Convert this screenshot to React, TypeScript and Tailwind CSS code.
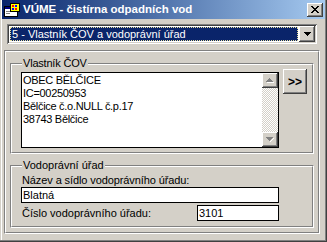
import React from "react";

const raised =
  "shadow-[inset_-1px_-1px_0_#404040,inset_1px_1px_0_#ffffff,inset_-2px_-2px_0_#808080]";
const sunken =
  "shadow-[inset_1px_1px_0_#808080,inset_-1px_-1px_0_#ffffff,inset_2px_2px_0_#404040,inset_-2px_-2px_0_#d4d0c8]";

function Etched({ className, children }: { className: string; children?: React.ReactNode }) {
  return (
    <div className={`border border-t-[#808080] border-l-[#808080] border-r-white border-b-white ${className}`}>
      <div className="w-full h-full border border-t-white border-l-white border-r-[#808080] border-b-[#808080] relative">
        {children}
      </div>
    </div>
  );
}

function AppIcon() {
  return (
    <svg width="16" height="16" viewBox="0 0 16 16" shapeRendering="crispEdges">
      <rect x="0.5" y="4.5" width="13" height="10" fill="#ffffff" stroke="#000000" />
      <rect x="1" y="5" width="12" height="2" fill="#000080" />
      <rect x="2" y="9" width="4" height="1" fill="#808080" />
      <rect x="2" y="11" width="4" height="1" fill="#808080" />
      <rect x="6.5" y="1.5" width="9" height="8" fill="#ffff00" stroke="#000000" />
      <rect x="8" y="3" width="2" height="2" fill="#ff0000" />
      <rect x="11" y="3" width="2" height="2" fill="#0000ff" />
      <rect x="8" y="6" width="2" height="2" fill="#0000ff" />
      <rect x="11" y="6" width="2" height="2" fill="#ff0000" />
    </svg>
  );
}

export default function App() {
  return (
    <div className="w-[327px] h-[242px] bg-[#404040] pr-px pb-px overflow-hidden font-['Liberation_Sans',Arial,sans-serif] text-[11px] text-black">
      <div className="h-full bg-[#808080] pr-px pb-px">
        <div className="h-full bg-[#d4d0c8] pl-px">
          <div className="h-full border-l border-white flex flex-col">
            {/* Title bar */}
            <div className="h-[19px] bg-linear-to-r from-[#0a246a] to-[#a6caf0] flex items-center pl-[2px] pr-[2px]">
              <AppIcon />
              <span className="ml-[3px] text-white font-bold text-[11.5px] leading-none">
                VÚME - čistírna odpadních vod
              </span>
              <div className={`ml-auto w-[16px] h-[14px] bg-[#d4d0c8] ${raised} flex items-center justify-center`}>
                <svg width="8" height="7" viewBox="0 0 8 7" shapeRendering="crispEdges">
                  <path d="M0 0h2v1h-2zM6 0h2v1h-2zM1 1h2v1h-2zM5 1h2v1h-2zM2 2h4v1h-4zM3 3h2v1h-2zM2 4h4v1h-4zM1 5h2v1h-2zM5 5h2v1h-2zM0 6h2v1h-2zM6 6h2v1h-2z" fill="#000" />
                </svg>
              </div>
            </div>

            {/* Combobox */}
            <div className={`ml-[5px] mt-[5px] w-[310px] h-[20px] bg-white ${sunken} p-[2px] flex`}>
              <div className="flex-1 p-[1px]">
                <div className="h-full bg-[#0a246a] outline-1 outline-dotted outline-[#e8e0a0] -outline-offset-1 text-white flex items-center pl-[2px] text-[11px] leading-none">
                  5 - Vlastník ČOV a vodoprávní úřad
                </div>
              </div>
              <div className={`w-[16px] h-full bg-[#d4d0c8] ${raised} flex items-center justify-center`}>
                <svg width="7" height="4" viewBox="0 0 7 4" shapeRendering="crispEdges">
                  <path d="M0 0h7v1h-7zM1 1h5v1h-5zM2 2h3v1h-3zM3 3h1v1h-1z" fill="#000" />
                </svg>
              </div>
            </div>

            {/* Outer frame */}
            <Etched className="ml-[2px] mt-[6px] w-[316px] h-[184px]">
              {/* Groupbox 1 */}
              <Etched className="ml-[4px] mt-[11px] w-[304px] h-[91px]">
                <span className="absolute left-[10px] -top-[8px] px-[1px] bg-[#d4d0c8] leading-[13px] tracking-[-0.2px]">
                  Vlastník ČOV
                </span>
                <div className="flex items-start pl-[9px] pt-[4px]">
                  <div className="mt-[3px] w-[258px] h-[76px] border border-black bg-white flex">
                    <div className="flex-1 pl-[1px] pt-[1px] leading-[13px] tracking-[-0.3px]">
                      <div>OBEC BĚLČICE</div>
                      <div>IC=00250953</div>
                      <div>Bělčice č.o.NULL č.p.17</div>
                      <div>38743 Bělčice</div>
                    </div>
                    <div className="w-[16px] h-full flex flex-col bg-[repeating-conic-gradient(#ffffff_0_25%,#d4d0c8_0_50%)] bg-[length:2px_2px]">
                      <div className={`h-[15px] bg-[#d4d0c8] ${raised} flex items-center justify-center`}>
                        <svg width="8" height="5" viewBox="0 0 8 5" shapeRendering="crispEdges">
                          <path d="M3 0h1v1h-1zM2 1h3v1h-3zM1 2h5v1h-5zM0 3h7v1h-7z" fill="#808080" />
                          <path d="M1 4h7v1h-7z" fill="#ffffff" />
                        </svg>
                      </div>
                      <div className="flex-1" />
                      <div className={`h-[15px] bg-[#d4d0c8] ${raised} flex items-center justify-center`}>
                        <svg width="8" height="5" viewBox="0 0 8 5" shapeRendering="crispEdges">
                          <path d="M0 0h7v1h-7zM1 1h5v1h-5zM2 2h3v1h-3zM3 3h1v1h-1z" fill="#808080" />
                          <path d="M7 1h1v1h-1zM6 2h1v1h-1zM5 3h1v1h-1zM4 4h1v1h-1z" fill="#ffffff" />
                        </svg>
                      </div>
                    </div>
                  </div>
                  <div className={`ml-[4px] w-[24px] h-[25px] bg-[#d4d0c8] ${raised} flex items-center justify-center font-bold text-[12px] leading-none`}>
                    &gt;&gt;
                  </div>
                </div>
              </Etched>

              {/* Groupbox 2 */}
              <Etched className="ml-[4px] mt-[11px] w-[304px] h-[63px]">
                <span className="absolute left-[10px] -top-[8px] px-[1px] bg-[#d4d0c8] leading-[13px]">
                  Vodoprávní úřad
                </span>
                <div className="pl-[9px] pt-[7px]">
                  <div className="pl-[1px] leading-[13px] tracking-[-0.1px]">Název a sídlo vodoprávního úřadu:</div>
                  <div className="w-[258px] h-[16px] border border-black bg-white pl-[1px] leading-[14px]">
                    Blatná
                  </div>
                  <div className="mt-[2px] w-[258px] h-[16px] flex items-center">
                    <span className="pl-[1px] leading-[13px]">Číslo vodoprávního úřadu:</span>
                    <div className="ml-auto w-[82px] h-[16px] border border-black bg-white pl-[1px] leading-[14px]">
                      3101
                    </div>
                  </div>
                </div>
              </Etched>
            </Etched>
          </div>
        </div>
      </div>
    </div>
  );
}
